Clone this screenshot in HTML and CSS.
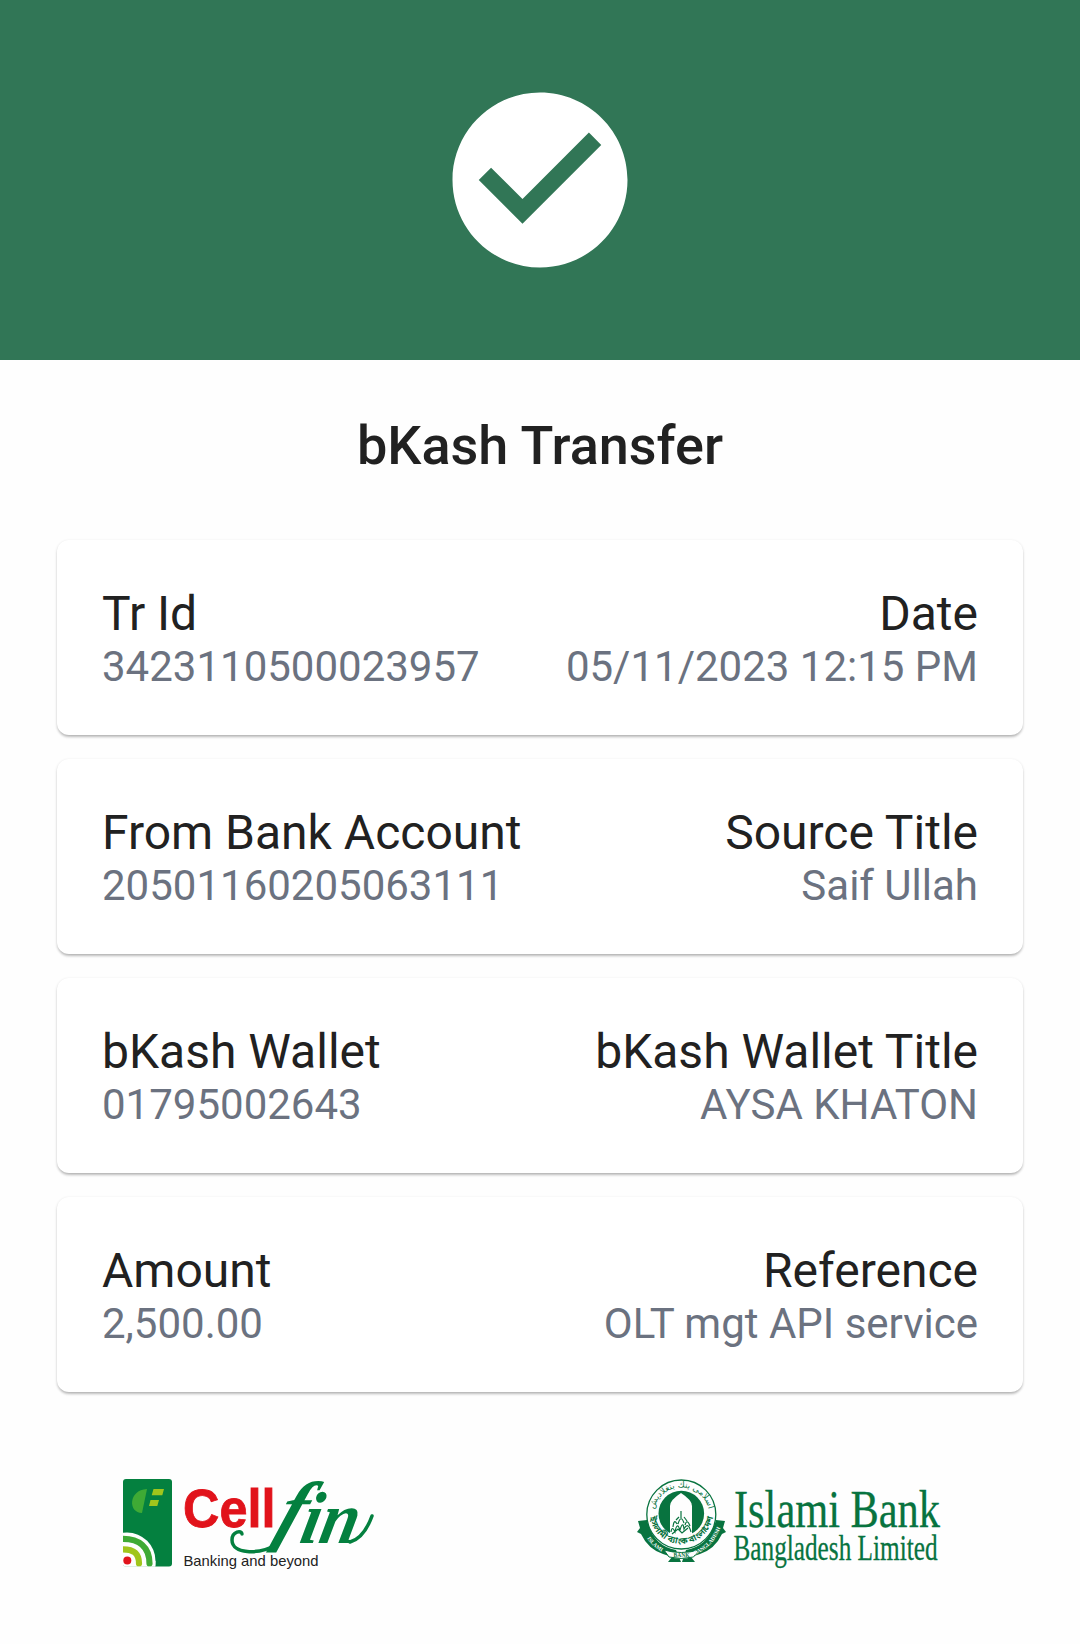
FILE: index.html
```html
<!DOCTYPE html>
<html lang="en">
<head>
<meta charset="utf-8">
<title>bKash Transfer</title>
<link rel="stylesheet" href="styles.css">
</head>
<body>
<header class="banner">
  <svg class="check" viewBox="0 0 24 24" role="img" aria-label="Success"><path d="M12 2C6.48 2 2 6.48 2 12s4.480 10 10 10 10-4.480 10-10S17.520 2 12 2zm-2 15l-5-5 1.410-1.410L10 14.170l7.590-7.590L19 8l-9 9z"/></svg>
</header>
<main class="receipt">
  <h1 class="title">bKash Transfer</h1>
  <section class="card">
    <div class="field"><span class="label">Tr Id</span><span class="value">3423110500023957</span></div>
    <div class="field end"><span class="label">Date</span><span class="value">05/11/2023 12:15 PM</span></div>
  </section>
  <section class="card">
    <div class="field"><span class="label">From Bank Account</span><span class="value">20501160205063111</span></div>
    <div class="field end"><span class="label">Source Title</span><span class="value">Saif Ullah</span></div>
  </section>
  <section class="card">
    <div class="field"><span class="label">bKash Wallet</span><span class="value">01795002643</span></div>
    <div class="field end"><span class="label">bKash Wallet Title</span><span class="value">AYSA KHATON</span></div>
  </section>
  <section class="card">
    <div class="field"><span class="label">Amount</span><span class="value">2,500.00</span></div>
    <div class="field end"><span class="label">Reference</span><span class="value">OLT mgt API service</span></div>
  </section>
</main>
<footer class="logos">
  <svg class="cellfin" viewBox="120 1472 260 104">
    <defs><clipPath id="phone"><rect x="123" y="1479" width="49" height="87.500" rx="3"/></clipPath></defs>
    <g clip-path="url(#phone)">
      <rect class="green" x="123" y="1479" width="49" height="88"/>
      <circle class="white" cx="127" cy="1561" r="28.500"/>
      <rect class="white" x="123" y="1561" width="32.500" height="6"/>
    </g>
    <path class="leaf" d="M147 1489L142 1513C128 1513 128 1490 147 1489Z"/>
    <path class="lime" d="M153.500 1489H164L162.300 1495.300H151.700ZM150.500 1500H159L157.300 1506H149Z"/>
    <path class="wave outer" d="M123 1538.800C139 1538.800 149.500 1547 149.500 1563.500"/>
    <path class="wave inner" d="M123 1549.300C133 1549.300 139 1553 139 1563.500"/>
    <circle class="red" cx="127.300" cy="1560.500" r="4"/>
    <text class="cell" x="183" y="1527" textLength="92.500" lengthAdjust="spacingAndGlyphs">Cell</text>
    <text class="fin tall" transform="translate(272 1536) skewX(-20)">f</text>
    <text class="fin" transform="translate(298 1543) skewX(-12)" textLength="57" lengthAdjust="spacingAndGlyphs">in</text>
    <path class="swash" d="M276 1545C258 1555 232 1554 232 1540C232 1531 242 1530 242 1534M350 1542C361 1539 368 1527 372 1516"/>
    <text class="tagline" x="183.500" y="1566" textLength="135" lengthAdjust="spacingAndGlyphs">Banking and beyond</text>
  </svg>
  <svg class="bank" viewBox="636 1472 308 104">
    <defs>
      <path id="arcTop" d="M654 1522A28 28 0 1 1 708.500 1522"/>
      <path id="arcBottom" d="M649.500 1517A32.200 32.200 0 0 0 713 1517"/>
      <path id="ribbonLeft" d="M643.500 1531Q650 1548 669 1555"/>
      <path id="ribbonRight" d="M694 1555Q713 1548 720.500 1527"/>
    </defs>
    <path class="deep" d="M638 1521L647 1520Q653 1546 676 1550L681 1562H668L672 1557L663 1554Q648 1549 641 1534L637 1532L640 1528Z"/>
    <path class="deep" d="M725 1521L716 1520Q709 1546 686 1550L682 1562H695L691 1557L700 1554Q715 1549 722 1534L726 1532L723 1528Z"/>
    <circle class="ring" cx="681.300" cy="1514.500" r="34.500"/>
    <path class="ribbon" d="M664 1550Q681 1555 699 1550L693.500 1557Q681 1560 669 1557Z"/>
    <circle class="deep" cx="681.300" cy="1513.500" r="22.800"/>
    <path class="white" d="M670 1534V1506Q670 1500 681 1493Q692 1500 692 1506V1534Q681 1541 670 1534Z"/>
    <path class="mosque" d="M681 1511V1518M671 1532Q672 1525 675 1532Q677 1521 680 1530Q683 1520 684 1529Q688 1521 691 1532M673 1527Q674 1518 677 1524M678 1524Q681 1514 684 1523M685 1525Q687 1518 690 1526M672 1534L678 1529L682 1533L688 1528M676 1520L679 1517M684 1517L687 1521"/>
    <text class="arabic"><textPath href="#arcTop" startOffset="50%">اسلامی بنك بنغلاديش</textPath></text>
    <text class="bengali"><textPath href="#arcBottom" startOffset="50%">ইসলামী ব্যাংক বাংলাদেশ</textPath></text>
    <text class="motto"><textPath href="#ribbonLeft" startOffset="50%">ISLAMI</textPath></text>
    <text class="motto"><textPath href="#ribbonRight" startOffset="50%">BANGLADESH</textPath></text>
    <text class="motto dark" x="681.500" y="1557.200">BANK</text>
    <text class="serif large" x="734" y="1526.500" textLength="206" lengthAdjust="spacingAndGlyphs">Islami Bank</text>
    <text class="serif small" x="733.500" y="1560" textLength="204" lengthAdjust="spacingAndGlyphs">Bangladesh Limited</text>
  </svg>
</footer>
</body>
</html>
```
FILE: styles.css
```css
* { box-sizing: border-box; }
body { margin: 0; height: 1644px; background: #fefefe; color: #212121; font-family: Roboto, sans-serif; }
.banner { height: 360px; background: #317656; display: flex; align-items: center; justify-content: center; }
.check { width: 210px; height: 210px; fill: #fff; }
.receipt { padding: 0 57px; display: flex; flex-direction: column; gap: 24px; }
.title { margin: 0; height: 156px; padding-top: 54px; font-size: 54px; line-height: 64px; font-weight: 500; text-align: center; }
.card { height: 195px; padding: 46px 45px 44px; border-radius: 12px; background: #fff; display: flex; justify-content: space-between; box-shadow: 0 3px 3px -1px rgba(0,0,0,.2), 0 1px 3px rgba(0,0,0,.16); }
.field { display: flex; flex-direction: column; white-space: nowrap; }
.end { align-items: flex-end; }
.label { font-size: 48px; line-height: 56px; }
.value { font-size: 42px; line-height: 49px; color: #6b7280; }
.logos { display: flex; justify-content: space-between; padding: 80px 136px 0 120px; }
.cellfin { width: 260px; height: 104px; }
.bank { width: 308px; height: 104px; }
.green { fill: #04803f; }
.white { fill: #fefefe; }
.leaf { fill: #3faa35; }
.lime { fill: #a0c51c; }
.red { fill: #e1131b; }
.wave { fill: none; stroke-width: 6.2; stroke-linecap: round; clip-path: url(#phone); }
.outer { stroke: #3faa35; }
.inner { stroke: #a0c51c; }
.cell { font: bold 53.5px "Liberation Sans", sans-serif; fill: #e1131b; stroke: #e1131b; stroke-width: .8; }
.fin { font: italic bold 74px "Liberation Serif", serif; fill: #04803f; }
.tall { font-size: 78px; }
.swash { fill: none; stroke: #04803f; stroke-width: 3.5; stroke-linecap: round; }
.tagline { font: 14.5px "Liberation Sans", sans-serif; fill: #222; }
.deep { fill: #08733f; }
.ring { fill: #fefefe; stroke: #08733f; stroke-width: 1.3; }
.ribbon { fill: #fefefe; stroke: #08733f; stroke-width: 1; }
.mosque { fill: none; stroke: #08733f; stroke-width: 1.2; }
.arabic { font: 8.5px "DejaVu Sans", sans-serif; fill: #08733f; text-anchor: middle; }
.bengali { font: bold 8.8px "Noto Sans Bengali", "Noto Sans", sans-serif; fill: #08733f; text-anchor: middle; }
.motto { font: bold 5.5px "Liberation Serif", serif; fill: #fff; text-anchor: middle; }
.dark { fill: #08733f; }
.serif { font-family: "Liberation Serif", serif; fill: #08733f; stroke: #08733f; stroke-width: .3; }
.large { font-size: 52px; }
.small { font-size: 36px; }
```
